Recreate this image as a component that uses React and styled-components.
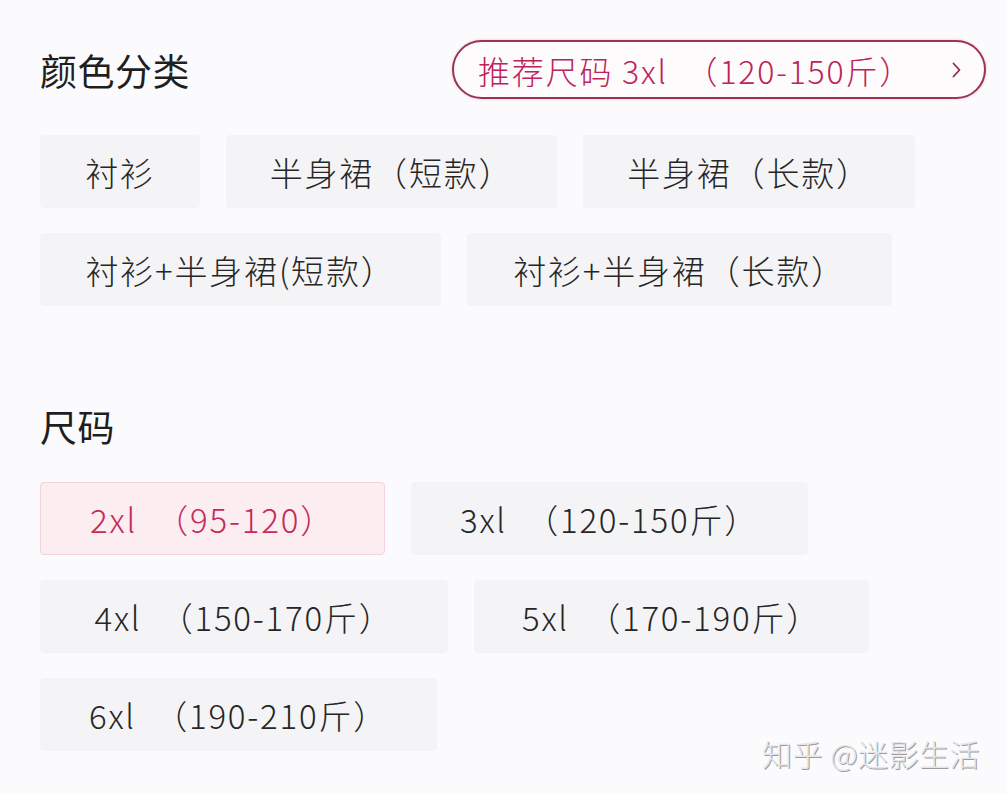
import React, { useState } from "react";
import styled, { createGlobalStyle } from "styled-components";

const GlobalStyle = createGlobalStyle`
  html, body {
    margin: 0;
    padding: 0;
    background: #fbfbfd;
  }
  * {
    box-sizing: border-box;
  }
`;

const FONT = `"Noto Sans CJK SC", "Noto Sans", sans-serif`;

const Page = styled.div`
  position: relative;
  min-height: 100vh;
  padding: 40px 20px 0 40px;
  font-family: ${FONT};
  font-weight: 300;
  color: #222222;
`;

const Header = styled.div`
  display: flex;
  align-items: center;
  justify-content: space-between;
  height: 59px;
`;

const Title = styled.h2`
  margin: 0;
  font-size: 37px;
  font-weight: 400;
  line-height: 44px;
  letter-spacing: 0.5px;
  color: #1f1f1f;
`;

const SizeTitle = styled(Title)`
  margin: 98px 0 34px;
`;

const Pill = styled.button`
  display: flex;
  align-items: center;
  gap: 38px;
  height: 59px;
  padding: 0 22px 0 24px;
  border: 2px solid #9c3354;
  border-radius: 30px;
  background: #fdfbfc;
  box-shadow: 0 0 3px rgba(220, 80, 130, 0.35);
  font-family: ${FONT};
  font-weight: 300;
  font-size: 32px;
  letter-spacing: 1.8px;
  white-space: pre;
  color: #bd225a;
  cursor: pointer;
`;

const Options = styled.div`
  display: flex;
  flex-wrap: wrap;
  gap: 25px 26px;
  margin-top: ${(p) => p.top || 0}px;
  width: 900px;
`;

const Chip = styled.div`
  display: flex;
  align-items: center;
  justify-content: center;
  width: ${(p) => p.w}px;
  height: 73px;
  border-radius: 4px;
  background: ${(p) => (p.active ? "#fcedf0" : "#f4f4f6")};
  border: 1px solid ${(p) => (p.active ? "#f2d5dc" : "#f4f4f6")};
  font-size: 33px;
  letter-spacing: 1.8px;
  color: ${(p) => (p.active ? "#c42a5c" : "#262626")};
  white-space: pre;
  cursor: pointer;
`;

const Watermark = styled.div`
  position: absolute;
  right: 26px;
  top: 731px;
  font-family: ${FONT};
  font-size: 30px;
  color: #e6e6e8;
  text-shadow: 1px 1px 0 #9c9c9c;
  letter-spacing: 0.5px;
`;

const colors = [
  { label: "衬衫", w: 160 },
  { label: "半身裙（短款）", w: 331 },
  { label: "半身裙（长款）", w: 332 },
  { label: "衬衫+半身裙(短款）", w: 401 },
  { label: "衬衫+半身裙（长款）", w: 425 },
];

const sizes = [
  { label: "2xl  （95-120）", w: 345 },
  { label: "3xl  （120-150斤）", w: 397 },
  { label: "4xl  （150-170斤）", w: 408 },
  { label: "5xl  （170-190斤）", w: 395 },
  { label: "6xl  （190-210斤）", w: 397 },
];

function Chevron() {
  return (
    <svg width="11" height="18" viewBox="0 0 11 18" fill="none">
      <path
        d="M2.5 2.5 L8.5 9 L2.5 15.5"
        stroke="#8e2c4b"
        strokeWidth="1.8"
        strokeLinecap="round"
        strokeLinejoin="round"
      />
    </svg>
  );
}

export default function App() {
  const [color, setColor] = useState(-1);
  const [size, setSize] = useState(0);

  return (
    <Page>
      <GlobalStyle />
      <Header>
        <Title>颜色分类</Title>
        <Pill>
          <span>推荐尺码 3xl  （120-150斤）</span>
          <Chevron />
        </Pill>
      </Header>

      <Options top={36}>
        {colors.map((c, i) => (
          <Chip
            key={c.label}
            w={c.w}
            active={color === i}
            onClick={() => setColor(i)}
          >
            {c.label}
          </Chip>
        ))}
      </Options>

      <SizeTitle>尺码</SizeTitle>

      <Options>
        {sizes.map((s, i) => (
          <Chip
            key={s.label}
            w={s.w}
            active={size === i}
            onClick={() => setSize(i)}
          >
            {s.label}
          </Chip>
        ))}
      </Options>

      <Watermark>知乎 @迷影生活</Watermark>
    </Page>
  );
}
